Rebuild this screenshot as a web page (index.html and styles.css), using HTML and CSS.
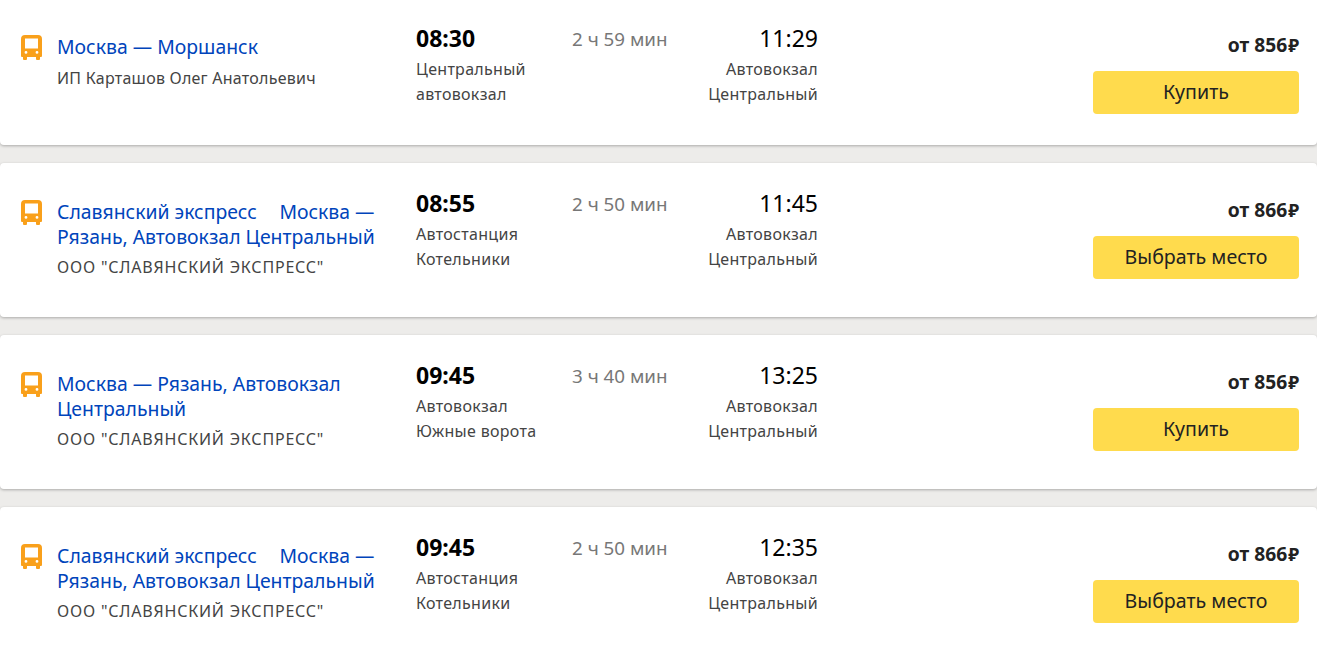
FILE: index.html
```html
<!DOCTYPE html>
<html lang="ru">
<head>
<meta charset="utf-8">
<title>Расписание</title>
<link rel="stylesheet" href="styles.css">
</head>
<body>
<svg class="defs" width="0" height="0" aria-hidden="true"><symbol id="bus" viewBox="0 0 21 25"><path fill="#f9a01b" fill-rule="evenodd" d="M4 0h13a4 4 0 0 1 4 4v17a1 1 0 0 1-1 1h-1v2a1 1 0 0 1-1 1h-2a1 1 0 0 1-1-1v-2H6v2a1 1 0 0 1-1 1H3a1 1 0 0 1-1-1v-2H1a1 1 0 0 1-1-1V4a4 4 0 0 1 4-4zM4 3.500v10h13v-10H4zM5 16a1.400 1.400 0 1 0 0 2.800 1.400 1.400 0 0 0 0-2.800zm11 0a1.400 1.400 0 1 0 0 2.800 1.400 1.400 0 0 0 0-2.800z"/></symbol></svg>
<main class="list">
  <article class="card card-first">
    <svg class="icon"><use href="#bus"/></svg>
    <div class="info"><a class="title">Москва — Моршанск</a><p class="carrier carrier-single">ИП Карташов Олег Анатольевич</p></div>
    <div class="point"><div class="time time-dep">08:30</div><div class="station">Центральный<br>автовокзал</div></div>
    <div class="duration">2 ч 59 мин</div>
    <div class="point point-arr"><div class="time">11:29</div><div class="station">Автовокзал<br>Центральный</div></div>
    <div class="buy"><div class="price">от 856<span class="rub">₽</span></div><button class="btn">Купить</button></div>
  </article>
  <article class="card">
    <svg class="icon"><use href="#bus"/></svg>
    <div class="info"><a class="title">Славянский экспресс&emsp;&thinsp;Москва — Рязань, Автовокзал Центральный</a><p class="carrier carrier-caps">ООО "СЛАВЯНСКИЙ ЭКСПРЕСС"</p></div>
    <div class="point"><div class="time time-dep">08:55</div><div class="station">Автостанция<br>Котельники</div></div>
    <div class="duration">2 ч 50 мин</div>
    <div class="point point-arr"><div class="time">11:45</div><div class="station">Автовокзал<br>Центральный</div></div>
    <div class="buy"><div class="price">от 866<span class="rub">₽</span></div><button class="btn">Выбрать место</button></div>
  </article>
  <article class="card">
    <svg class="icon"><use href="#bus"/></svg>
    <div class="info"><a class="title">Москва — Рязань, Автовокзал Центральный</a><p class="carrier carrier-caps">ООО "СЛАВЯНСКИЙ ЭКСПРЕСС"</p></div>
    <div class="point"><div class="time time-dep">09:45</div><div class="station">Автовокзал<br>Южные ворота</div></div>
    <div class="duration">3 ч 40 мин</div>
    <div class="point point-arr"><div class="time">13:25</div><div class="station">Автовокзал<br>Центральный</div></div>
    <div class="buy"><div class="price">от 856<span class="rub">₽</span></div><button class="btn">Купить</button></div>
  </article>
  <article class="card">
    <svg class="icon"><use href="#bus"/></svg>
    <div class="info"><a class="title">Славянский экспресс&emsp;&thinsp;Москва — Рязань, Автовокзал Центральный</a><p class="carrier carrier-caps">ООО "СЛАВЯНСКИЙ ЭКСПРЕСС"</p></div>
    <div class="point"><div class="time time-dep">09:45</div><div class="station">Автостанция<br>Котельники</div></div>
    <div class="duration">2 ч 50 мин</div>
    <div class="point point-arr"><div class="time">12:35</div><div class="station">Автовокзал<br>Центральный</div></div>
    <div class="buy"><div class="price">от 866<span class="rub">₽</span></div><button class="btn">Выбрать место</button></div>
  </article>
</main>
</body>
</html>
```
FILE: styles.css
```css
* { box-sizing: border-box; }
html, body { margin: 0; height: 652px; overflow: hidden; }
body { background: #edecea; font-family: "Noto Sans", "Open Sans", sans-serif; color: #333; }
.defs { position: absolute; }
.list { display: flex; flex-direction: column; gap: 18px; }
.card {
  display: flex;
  align-items: flex-start;
  flex: none;
  height: 154px;
  padding: 28px 18px 0 21px;
  background: #fff;
  border-radius: 4px;
  box-shadow: 0 1px 3px rgba(0,0,0,.28);
}
.card-first { height: 145px; padding-top: 26px; border-radius: 0 0 4px 4px; }
.icon { flex: none; width: 21px; height: 25px; margin-top: 9px; margin-right: 15px; }
.info { flex: none; width: 359px; padding-right: 30px; }
.title { display: block; font-size: 19.400px; line-height: 25px; margin-top: 8px; color: #0044bb; }
.carrier { margin: 6px 0 0; font-size: 16px; letter-spacing: .25px; line-height: 25px; color: #444; }
.carrier-single { margin-top: 7px; }
.carrier-caps { letter-spacing: .8px; }
.point { flex: none; width: 156px; }
.point-arr { width: 110px; text-align: right; margin-left: 36px; }
.time { font-size: 23px; line-height: 25px; color: #000; }
.time-dep { font-weight: 700; }
.station { margin-top: 5.500px; font-size: 16px; letter-spacing: .3px; line-height: 25px; color: #444; }
.duration { flex: none; width: 100px; margin-top: 1px; font-size: 18.800px; line-height: 25px; color: #777; }
.buy { flex: none; width: 206px; margin-left: auto; text-align: right; }
.price { margin-top: 6px; font-size: 19.200px; line-height: 25px; font-weight: 700; color: #222; }
.rub { margin-left: 1px; font-size: 18px; }
.btn {
  display: block;
  width: 100%;
  height: 42.500px;
  margin-top: 13px;
  padding: 0 0 2px;
  border: 0;
  border-radius: 4px;
  background: #ffdb4d;
  font: 19.600px/41px "Noto Sans", sans-serif;
  color: #222;
}
```
